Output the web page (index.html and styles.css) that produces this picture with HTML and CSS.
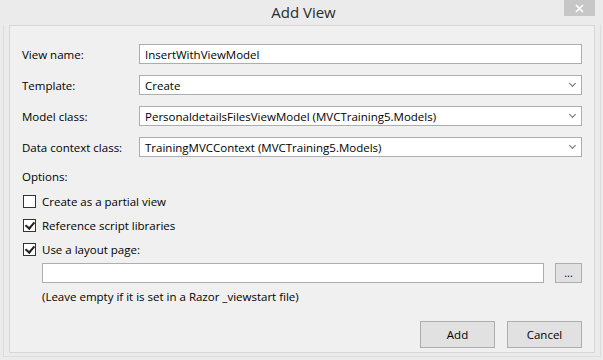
FILE: index.html
```html
<!DOCTYPE html>
<html lang="en">
  <head>
    <meta charset="UTF-8" />
    <title>Add View</title>
    <link rel="stylesheet" href="styles.css">
  </head>
  <body>
    <div class="window">
      <!-- TITLE BAR -->
      <div class="titlebar">
        <span></span>
        <span class="title">Add View</span>
        <button class="close" aria-label="Close">
          <svg width="9" height="9" viewBox="0 0 9 9"><path d="M1 1 L8 8 M8 1 L1 8" stroke="#fff" stroke-width="1.7"/></svg>
        </button>
      </div>

      <!-- BODY -->
      <div class="frame">
        <div class="panel">
          <div class="fields">
            <label class="label" for="view-name">View name:</label>
            <input id="view-name" class="field" type="text" value="InsertWithViewModel">

            <span class="label">Template:</span>
            <div class="field combo"><span>Create</span><i class="chev"></i></div>

            <span class="label">Model class:</span>
            <div class="field combo"><span>PersonaldetailsFilesViewModel (MVCTraining5.Models)</span><i class="chev"></i></div>

            <span class="label">Data context class:</span>
            <div class="field combo"><span>TrainingMVCContext (MVCTraining5.Models)</span><i class="chev"></i></div>
          </div>

          <div class="options">
            <div class="options-title">Options:</div>
            <label class="check"><span class="box"></span>Create as a partial view</label>
            <label class="check"><span class="box checked"></span>Reference script libraries</label>
            <label class="check"><span class="box checked"></span>Use a layout page:</label>
            <div class="layout-row">
              <input class="field layout-input" type="text" value="">
              <button class="btn small">...</button>
            </div>
            <div class="hint">(Leave empty if it is set in a Razor _viewstart file)</div>
          </div>

          <div class="actions">
            <button class="btn">Add</button>
            <button class="btn">Cancel</button>
          </div>
        </div>
      </div>
    </div>
  </body>
</html>
```

FILE: styles.css
```css
:root {
  --frame: #ebebeb;
  --panel: #f0f0f0;
  --line: #d6d6d6;
  --input-border: #abadb3;
  --btn-bg: #e1e1e1;
  --btn-border: #adadad;
}

* {
  box-sizing: border-box;
  font-family: "Open Sans", "Liberation Sans", sans-serif;
}

body {
  margin: 0;
  background: var(--frame);
  color: #000;
  font-size: 11.5px;
}

.window {
  width: 603px;
  height: 360px;
  display: flex;
  flex-direction: column;
}

/* ───── TITLE BAR ───── */
.titlebar {
  height: 25px;
  display: grid;
  grid-template-columns: 1fr auto 1fr;
  align-items: start;
}

.title {
  font-size: 15px;
  color: #2b2b2b;
  line-height: 25px;
  padding-left: 4px;
}

.close {
  justify-self: end;
  margin-right: 8px;
  width: 31px;
  height: 16px;
  border: none;
  background: #c7c7c7;
  padding: 0;
  display: flex;
  align-items: center;
  justify-content: center;
}

/* ───── FRAME ───── */
.frame {
  flex: 1;
  margin: 0 2px 3px 3px;
  padding: 0 5px 3px 5px;
  border-left: 1px solid #dcdcdc;
  border-right: 1px solid #dcdcdc;
  border-bottom: 1px solid #dcdcdc;
  display: flex;
}

.panel {
  flex: 1;
  background: var(--panel);
  border: 1px solid var(--line);
  padding: 18px 12px 0 12px;
  display: flex;
  flex-direction: column;
}

/* form rows */
.fields {
  display: grid;
  grid-template-columns: 117px 1fr;
  row-gap: 11px;
  align-items: center;
}

.field {
  height: 20px;
  border: 1px solid var(--input-border);
  background: #fff;
  font-size: 11.5px;
  padding: 0 5px;
  margin: 0;
  color: #000;
  outline: none;
}

.combo {
  display: flex;
  align-items: center;
  justify-content: space-between;
  padding-right: 6px;
}

.chev {
  width: 5px;
  height: 5px;
  border-right: 1px solid #707070;
  border-bottom: 1px solid #707070;
  transform: rotate(45deg);
  margin-top: -3px;
}

/* ───── OPTIONS ───── */
.options {
  display: flex;
  flex-direction: column;
  margin-top: 11px;
}

.options-title {
  line-height: 17px;
  margin-bottom: 9px;
}

.check {
  display: flex;
  align-items: center;
  gap: 6px;
  height: 14px;
  margin-left: 1px;
  margin-bottom: 10px;
}

.box {
  width: 13px;
  height: 13px;
  border: 1px solid #333;
  background: #fff;
  position: relative;
}

.box.checked::after {
  content: "";
  position: absolute;
  left: 3px;
  top: 0px;
  width: 4px;
  height: 7px;
  border-right: 2px solid #222;
  border-bottom: 2px solid #222;
  transform: rotate(40deg);
}

.layout-row {
  display: flex;
  gap: 11px;
  margin-left: 20px;
  margin-top: -3px;
}

.layout-input {
  width: 502px;
}

.btn {
  background: var(--btn-bg);
  border: 1px solid var(--btn-border);
  font-size: 11.5px;
  color: #000;
  padding: 0;
  height: 27px;
  width: 75px;
}

.btn.small {
  width: 27px;
  height: 20px;
  line-height: 12px;
  font-size: 11px;
}

.hint {
  margin-left: 20px;
  margin-top: 5px;
  line-height: 17px;
}

/* ───── ACTIONS ───── */
.actions {
  display: flex;
  justify-content: flex-end;
  gap: 12px;
  margin-top: 16px;
}
```
